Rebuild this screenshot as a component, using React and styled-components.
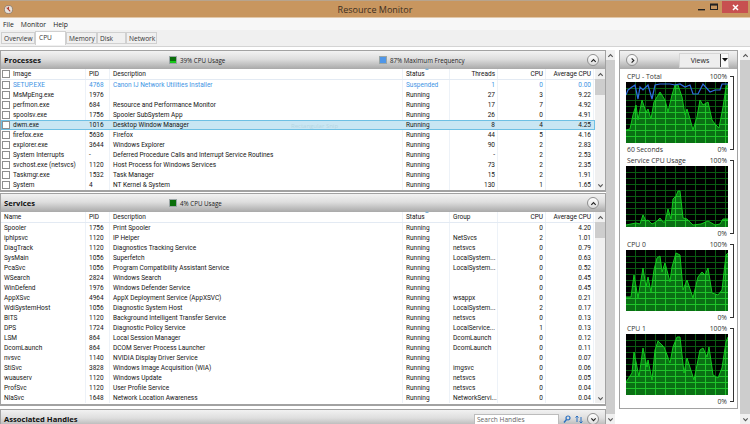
import React, { useId } from "react";
import styled, { createGlobalStyle } from "styled-components";

const GlobalStyle = createGlobalStyle`
  html, body { margin: 0; padding: 0; background: #fff; }
  * { box-sizing: border-box; }
`;

const Window = styled.div`
  position: relative;
  width: 750px;
  height: 424px;
  overflow: hidden;
  display: flex;
  flex-direction: column;
  background: #fff;
  color: #141414;
  font-family: "Open Sans", "Noto Sans", sans-serif;
  font-size: 6px;
`;

const TitleBar = styled.div`
  height: 18px;
  flex: none;
  display: flex;
  align-items: center;
  justify-content: center;
  position: relative;
  background: #c8965f;
  border-top: 1px solid #b7a48e;
  border-bottom: 1px solid #e2c8aa;
  font-size: 9px;
  color: #3d2f22;
`;

const AppIcon = styled.svg`
  position: absolute;
  left: 4px;
  top: 4px;
`;

const Controls = styled.div`
  position: absolute;
  right: 2px;
  top: 0;
  display: flex;
  align-items: flex-start;
  gap: 4px;
`;

const Ctrl = styled.div`
  width: ${({ $w }) => $w}px;
  height: 12px;
  display: flex;
  align-items: center;
  justify-content: center;
  color: #222;
  background: ${({ $close }) => ($close ? "#c75050" : "transparent")};
`;

const MenuBar = styled.div`
  height: 12px;
  flex: none;
  display: flex;
  align-items: center;
  gap: 7px;
  padding: 1px 0 0 3px;
  background: #f7f7f7;
  font-size: 6.8px;
  color: #222;
`;

const TabStrip = styled.div`
  height: 17px;
  flex: none;
  display: flex;
  align-items: flex-end;
  padding: 0 0 2px 1px;
  background: #f0f0f0;
  border-bottom: 1px solid #d4d4d4;
`;

const Tab = styled.div`
  width: ${({ $w }) => $w}px;
  height: ${({ $active }) => ($active ? 14 : 12)}px;
  padding: ${({ $active }) => ($active ? "0 0 2px 3px" : "0 0 0 2px")};
  margin-bottom: ${({ $active }) => ($active ? -1 : 0)}px;
  display: flex;
  align-items: center;
  font-size: 6.6px;
  color: #333;
  background: ${({ $active }) => ($active ? "#fff" : "#f0f0f0")};
  border: 1px solid #d0d0d0;
  border-bottom: ${({ $active }) => ($active ? "none" : "1px solid #d0d0d0")};
`;

const Body = styled.div`
  flex: 1;
  min-height: 0;
  display: flex;
  padding-top: 3px;
`;

const LeftColumn = styled.div`
  width: 606px;
  flex: none;
  display: flex;
  flex-direction: column;
  gap: 1px;
`;

const Panel = styled.section`
  display: flex;
  flex-direction: column;
  margin-top: ${({ $mt }) => $mt || 0}px;
  border: 1px solid #a2a2a2;
  border-bottom-width: 2px;
  background: #fff;
`;

const PanelHeader = styled.div`
  height: 18px;
  flex: none;
  display: flex;
  align-items: center;
  padding-right: 6px;
  background: linear-gradient(#f2f2f2, #dedede 45%, #a9a9a9);
`;

const PanelTitle = styled.div`
  width: 168px;
  padding-left: 3px;
  font-size: 7.6px;
  font-weight: 700;
  color: #111;
`;

const Legend = styled.div`
  width: ${({ $w }) => $w}px;
  display: flex;
  align-items: center;
  gap: 3px;
  font-size: 6.2px;
  color: #222;
`;

const Swatch = styled.span`
  width: 8px;
  height: 8px;
  flex: none;
  border: 1px solid #9aa5a5;
  background: ${({ $bottom, $top }) =>
    `linear-gradient(${$top} 70%, ${$bottom} 70%)`};
`;

const Spacer = styled.div`
  flex: 1;
`;

const RoundButton = styled.button`
  width: 12px;
  height: 12px;
  padding: 0;
  flex: none;
  display: flex;
  align-items: center;
  justify-content: center;
  border-radius: 50%;
  border: 1px solid #8f8f8f;
  background: linear-gradient(#fff, #dcdcdc);
  color: #222;
`;

const TableWrap = styled.div`
  display: flex;
  padding-bottom: ${({ $pb }) => $pb || 0}px;
`;

const Rows = styled.div`
  width: 594px;
  flex: none;
  font-family: Roboto, "Open Sans", sans-serif;
  font-size: 6.5px;
`;

const Row = styled.div`
  display: grid;
  grid-template-columns: 85px 24px 293px 47px 48px 48px 48px;
  height: ${({ $head, $h }) => ($head ? $h : 10)}px;
  align-items: stretch;
  color: ${({ $blue }) => ($blue ? "#3e94e4" : "inherit")};
  background: ${({ $sel }) => ($sel ? "#c9e6f3" : "transparent")};
  outline: ${({ $sel }) => ($sel ? "1px solid #6fc0e4" : "none")};
  outline-offset: -1px;
  border-bottom: ${({ $head }) => ($head ? "1px solid #e3eaf3" : "none")};
`;

const Cell = styled.div`
  display: flex;
  align-items: center;
  justify-content: ${({ $right }) => ($right ? "flex-end" : "flex-start")};
  gap: 3px;
  min-width: 0;
  position: relative;
  white-space: nowrap;
  overflow: visible;
  padding: ${({ $right }) => ($right ? "0 2px 0 0" : "0 0 0 3px")};
  border-right: 1px solid ${({ $sel }) => ($sel ? "transparent" : "#edf2f8")};
`;

const Check = styled.span`
  width: 8px;
  height: 8px;
  flex: none;
  margin-left: -2px;
  border: 1px solid #8e8f8f;
  background: #fff;
`;

const SortMark = styled.span`
  position: absolute;
  left: 22px;
  top: -1px;
  width: 0;
  height: 0;
  border-left: 2px solid transparent;
  border-right: 2px solid transparent;
  border-bottom: 2px solid #7fb4dc;
`;

const Scroll = styled.div`
  flex: none;
  width: ${({ $w }) => $w || 10}px;
  display: flex;
  flex-direction: column;
  align-items: center;
  background: #f0f0f0;
  color: #555;
`;

const Arrow = styled.div`
  height: 10px;
  width: 100%;
  flex: none;
  display: flex;
  align-items: center;
  justify-content: center;
`;

const Thumb = styled.div`
  width: 100%;
  height: ${({ $h }) => ($h ? `${$h}px` : "auto")};
  flex: ${({ $h }) => ($h ? "none" : 1)};
  background: #cdcdcd;
`;

const Fill = styled.div`
  flex: 1;
`;

const SearchBox = styled.div`
  width: 85px;
  height: 10px;
  padding-left: 2px;
  display: flex;
  align-items: center;
  background: #fff;
  border: 1px solid #bcbcbc;
  border-bottom: none;
  font-size: 6.6px;
  color: #666;
`;

const HandleTools = styled.div`
  display: flex;
  align-items: center;
  align-self: flex-start;
  gap: 4px;
  margin-top: 3px;
  color: #2a6fc0;
`;

const Gutter = styled(Scroll)`
  margin-left: ${({ $ml }) => $ml || 0}px;
`;

const RightPane = styled.aside`
  width: 119px;
  height: 359px;
  flex: none;
  margin-left: 4px;
  display: flex;
  flex-direction: column;
  border: 1px solid #a2a2a2;
  background: #fff;
`;

const RightHeader = styled.div`
  height: 18px;
  flex: none;
  display: flex;
  align-items: center;
  justify-content: space-between;
  padding: 0 8px 0 6px;
  background: linear-gradient(#f2f2f2, #dedede 45%, #a9a9a9);
`;

const ViewsButton = styled.div`
  width: 50px;
  height: 15px;
  display: flex;
  align-items: center;
  font-size: 7px;
  color: #222;
  background: #eeeeee;
  border: 1px solid #d6d6d6;
`;

const ViewsLabel = styled.span`
  flex: 1;
  text-align: center;
`;

const ViewsCaret = styled.span`
  width: 8px;
  height: 100%;
  display: flex;
  align-items: center;
  justify-content: center;
  border-left: 1px solid #444;
  background: #fafafa;
`;

const Charts = styled.div`
  padding: 2px 0 0 6px;
`;

const ChartBlock = styled.div`
  position: relative;
  width: 103px;
  height: 84px;
  display: grid;
  grid-template-rows: 11px 61px 12px;
  &::after {
    content: "";
    position: absolute;
    left: 104px;
    top: 5px;
    width: 3px;
    bottom: 5px;
    border: 1px solid #333;
    border-left: none;
  }
`;

const ChartLine = styled.div`
  display: flex;
  justify-content: space-between;
  align-items: center;
  padding: 0 2px 0 1px;
  font-size: 6.8px;
  color: #333;
`;

const GraphSvg = styled.svg`
  display: block;
  background: #000;
`;

const SnipGhost = styled.span`
  position: absolute;
  left: 291px;
  top: 122px;
  font-size: 6px;
  color: #b5d6e3;
`;

const processes = [
  ["SETUP.EXE", "4768", "Canon IJ Network Utilities Installer", "Suspended", "1", "0", "0.00"],
  ["MsMpEng.exe", "1976", "", "Running", "27", "3", "9.22"],
  ["perfmon.exe", "684", "Resource and Performance Monitor", "Running", "17", "7", "4.92"],
  ["spoolsv.exe", "1756", "Spooler SubSystem App", "Running", "26", "0", "4.91"],
  ["dwm.exe", "1016", "Desktop Window Manager", "Running", "8", "4", "4.25"],
  ["firefox.exe", "5636", "Firefox", "Running", "44", "5", "4.16"],
  ["explorer.exe", "3644", "Windows Explorer", "Running", "90", "2", "2.83"],
  ["System Interrupts", "-", "Deferred Procedure Calls and Interrupt Service Routines", "Running", "-", "2", "2.53"],
  ["svchost.exe (netsvcs)", "1120", "Host Process for Windows Services", "Running", "73", "2", "2.35"],
  ["Taskmgr.exe", "1532", "Task Manager", "Running", "15", "2", "1.91"],
  ["System", "4", "NT Kernel & System", "Running", "130", "1", "1.65"],
];

const services = [
  ["Spooler", "1756", "Print Spooler", "Running", "", "0", "4.20"],
  ["iphlpsvc", "1120", "IP Helper", "Running", "NetSvcs", "2", "1.01"],
  ["DiagTrack", "1120", "Diagnostics Tracking Service", "Running", "netsvcs", "0", "0.79"],
  ["SysMain", "1056", "Superfetch", "Running", "LocalSystem...", "0", "0.63"],
  ["PcaSvc", "1056", "Program Compatibility Assistant Service", "Running", "LocalSystem...", "0", "0.52"],
  ["WSearch", "2824", "Windows Search", "Running", "", "0", "0.45"],
  ["WinDefend", "1976", "Windows Defender Service", "Running", "", "0", "0.45"],
  ["AppXSvc", "4964", "AppX Deployment Service (AppXSVC)", "Running", "wsappx", "0", "0.21"],
  ["WdiSystemHost", "1056", "Diagnostic System Host", "Running", "LocalSystem...", "2", "0.17"],
  ["BITS", "1120", "Background Intelligent Transfer Service", "Running", "netsvcs", "0", "0.13"],
  ["DPS", "1724", "Diagnostic Policy Service", "Running", "LocalService...", "1", "0.13"],
  ["LSM", "864", "Local Session Manager", "Running", "DcomLaunch", "0", "0.12"],
  ["DcomLaunch", "864", "DCOM Server Process Launcher", "Running", "DcomLaunch", "0", "0.11"],
  ["nvsvc", "1140", "NVIDIA Display Driver Service", "Running", "", "0", "0.07"],
  ["StiSvc", "3828", "Windows Image Acquisition (WIA)", "Running", "imgsvc", "0", "0.06"],
  ["wuauserv", "1120", "Windows Update", "Running", "netsvcs", "0", "0.05"],
  ["ProfSvc", "1120", "User Profile Service", "Running", "netsvcs", "0", "0.04"],
  ["NlaSvc", "1648", "Network Location Awareness", "Running", "NetworkServi...", "0", "0.04"],
];

const graphs = [
  {
    top: "CPU - Total",
    bottom: "60 Seconds",
    line: "0,48 4,47 7,33 10,23 12,38 16,18 20,30 22,27 25,37 28,20 31,15 34,10 39,18 42,30 46,13 49,3 52,3 56,15 59,33 61,27 64,37 67,48 71,35 74,18 77,23 82,20 86,38 89,42 93,46 97,25 100,5 102,2",
    freq: "0,13 2,8 6,5 9,3 12,17 14,5 17,8 22,3 26,17 29,3 34,2 39,2 44,2 49,3 54,2 59,5 64,3 67,12 72,12 77,2 84,10 89,8 94,8 96,2 102,2",
  },
  {
    top: "Service CPU Usage",
    line: "0,59 5,58 10,57 14,58 17,49 20,55 22,54 26,58 30,56 34,52 37,56 39,56 42,43 45,53 47,33 50,30 52,25 54,25 57,52 61,53 67,59 75,58 82,55 89,59 94,58 97,53 102,53",
  },
  {
    top: "CPU 0",
    line: "0,47 5,47 8,25 12,48 17,18 20,37 22,27 25,42 28,20 31,8 34,6 36,22 39,13 44,32 46,17 50,3 54,5 57,40 61,30 67,48 72,27 76,22 79,25 82,18 86,43 92,45 96,40 100,5 102,3",
  },
  {
    top: "CPU 1",
    line: "0,48 6,39 8,18 13,43 17,14 21,33 22,26 26,46 29,16 32,7 38,13 44,29 47,13 51,3 54,3 58,39 61,24 68,46 74,16 77,14 81,23 83,13 87,41 92,44 96,34 100,8 102,3",
  },
];

const Chevron = ({ up, size = 7 }) => (
  <svg width={size} height={size} viewBox="0 0 8 8">
    <path
      d={up ? "M1.5 5.5 4 3 6.5 5.5" : "M1.5 2.8 4 5.3 6.5 2.8"}
      fill="none"
      stroke="currentColor"
      strokeWidth="1.3"
    />
  </svg>
);

const Graph = ({ line, freq }) => {
  const clip = useId();
  const area = `0,61 ${line} 102,61`;
  const verticals = Array.from({ length: 10 }, (_, i) => 9 + i * 10);
  const horizontals = Array.from({ length: 9 }, (_, i) => 6 + i * 6);
  const grid = (
    <>
      {verticals.map((x) => (
        <line key={x} x1={x + 0.5} x2={x + 0.5} y1="0" y2="61" />
      ))}
      {horizontals.map((y) => (
        <line key={y} x1="0" x2="102" y1={y + 0.5} y2={y + 0.5} />
      ))}
    </>
  );
  return (
    <GraphSvg width="102" height="61" viewBox="0 0 102 61">
      <defs>
        <clipPath id={clip}>
          <polygon points={area} />
        </clipPath>
      </defs>
      <g stroke="#0a5c12" strokeWidth="1">{grid}</g>
      <polygon points={area} fill="#0a7014" />
      <g stroke="#1fc42a" strokeWidth="1" clipPath={`url(#${clip})`}>{grid}</g>
      <polyline points={line} fill="none" stroke="#12c81e" strokeWidth="1" />
      {freq && <polyline points={freq} fill="none" stroke="#2f6fe0" strokeWidth="1.2" />}
    </GraphSvg>
  );
};

const ListRow = ({ row, withCheck, sel }) => (
  <Row $blue={row[0] === "SETUP.EXE"} $sel={sel}>
    <Cell $sel={sel}>
      {withCheck && <Check />}
      {row[0]}
    </Cell>
    <Cell $sel={sel}>{row[1]}</Cell>
    <Cell $sel={sel}>{row[2]}</Cell>
    <Cell $sel={sel}>{row[3]}</Cell>
    {withCheck ? <Cell $right $sel={sel}>{row[4]}</Cell> : <Cell $sel={sel}>{row[4]}</Cell>}
    <Cell $right $sel={sel}>{row[5]}</Cell>
    <Cell $right $sel={sel}>{row[6]}</Cell>
  </Row>
);

const HeadRow = ({ first, fifth, withCheck, h }) => (
  <Row $head $h={h}>
    <Cell>
      {withCheck && <Check />}
      {first}
    </Cell>
    <Cell>PID</Cell>
    <Cell>Description</Cell>
    <Cell>
      Status
      <SortMark />
    </Cell>
    {withCheck ? <Cell $right>{fifth}</Cell> : <Cell>{fifth}</Cell>}
    <Cell $right>CPU</Cell>
    <Cell $right>Average CPU</Cell>
  </Row>
);

const InnerScroll = () => (
  <Scroll>
    <Arrow>
      <Chevron up />
    </Arrow>
    <Thumb $h={16} />
    <Fill />
    <Arrow>
      <Chevron />
    </Arrow>
  </Scroll>
);

export default function App() {
  return (
    <>
      <GlobalStyle />
      <Window>
        <TitleBar>
          <AppIcon width="9" height="9" viewBox="0 0 10 10">
            <circle cx="5" cy="5" r="4.5" fill="#e9e3dc" stroke="#8c7f72" />
            <path d="M3 3 7 7M5 2 5 5" stroke="#b03a2e" strokeWidth="1.2" />
          </AppIcon>
          Resource Monitor
          <Controls>
            <Ctrl $w={8}>
              <svg width="8" height="8" viewBox="0 0 8 8">
                <rect x="0" y="6" width="7" height="1.4" fill="#222" />
              </svg>
            </Ctrl>
            <Ctrl $w={8}>
              <svg width="8" height="8" viewBox="0 0 8 8">
                <rect x="0.5" y="1" width="7" height="5.5" fill="none" stroke="#222" />
                <rect x="0.5" y="1" width="7" height="1.6" fill="#222" />
              </svg>
            </Ctrl>
            <Ctrl $w={26} $close>
              <svg width="7" height="7" viewBox="0 0 7 7">
                <path d="M1 1 6 6M6 1 1 6" stroke="#fff" strokeWidth="1.5" />
              </svg>
            </Ctrl>
          </Controls>
        </TitleBar>
        <MenuBar>
          <span>File</span>
          <span>Monitor</span>
          <span>Help</span>
        </MenuBar>
        <TabStrip>
          <Tab $w={34}>Overview</Tab>
          <Tab $w={31} $active>CPU</Tab>
          <Tab $w={31}>Memory</Tab>
          <Tab $w={29}>Disk</Tab>
          <Tab $w={31}>Network</Tab>
        </TabStrip>
        <Body>
          <LeftColumn>
            <Panel>
              <PanelHeader>
                <PanelTitle>Processes</PanelTitle>
                <Legend $w={210}>
                  <Swatch $top="#0a6e0a" $bottom="#18c818" />
                  39% CPU Usage
                </Legend>
                <Legend $w={120}>
                  <Swatch $top="#4f96e8" $bottom="#4f96e8" />
                  87% Maximum Frequency
                </Legend>
                <Spacer />
                <RoundButton>
                  <Chevron up />
                </RoundButton>
              </PanelHeader>
              <TableWrap>
                <Rows>
                  <HeadRow first="Image" fifth="Threads" withCheck h={11} />
                  {processes.map((row) => (
                    <ListRow key={row[0]} row={row} withCheck sel={row[0] === "dwm.exe"} />
                  ))}
                </Rows>
                <InnerScroll />
              </TableWrap>
            </Panel>
            <Panel>
              <PanelHeader>
                <PanelTitle>Services</PanelTitle>
                <Legend $w={210}>
                  <Swatch $top="#0a6e0a" $bottom="#0a6e0a" />
                  4% CPU Usage
                </Legend>
                <Spacer />
                <RoundButton>
                  <Chevron up />
                </RoundButton>
              </PanelHeader>
              <TableWrap $pb={1}>
                <Rows>
                  <HeadRow first="Name" fifth="Group" h={11} />
                  {services.map((row) => (
                    <ListRow key={row[0]} row={row} />
                  ))}
                </Rows>
                <InnerScroll />
              </TableWrap>
            </Panel>
            <Panel $mt={2}>
              <PanelHeader>
                <PanelTitle>Associated Handles</PanelTitle>
                <Spacer />
                <HandleTools>
                  <SearchBox>Search Handles</SearchBox>
                  <svg width="8" height="9" viewBox="0 0 8 9">
                    <circle cx="5" cy="3" r="2" fill="none" stroke="#2a6fc0" strokeWidth="1.2" />
                    <path d="M3.5 4.5 1 7.5" stroke="#2a6fc0" strokeWidth="1.4" />
                  </svg>
                  <svg width="8" height="9" viewBox="0 0 8 9">
                    <path d="M2 1 2 7M0.5 2.5 2 1 3.5 2.5M6 8 6 2M4.5 6.5 6 8 7.5 6.5" fill="none" stroke="#2a6fc0" />
                  </svg>
                  <RoundButton>
                    <Chevron />
                  </RoundButton>
                </HandleTools>
              </PanelHeader>
            </Panel>
          </LeftColumn>
          <Gutter $w={9}>
            <Arrow>
              <Chevron up />
            </Arrow>
            <Thumb />
            <Arrow>
              <Chevron />
            </Arrow>
          </Gutter>
          <RightPane>
            <RightHeader>
              <RoundButton>
                <svg width="7" height="7" viewBox="0 0 8 8">
                  <path d="M3 1.5 5.5 4 3 6.5" fill="none" stroke="#222" strokeWidth="1.3" />
                </svg>
              </RoundButton>
              <ViewsButton>
                <ViewsLabel>Views</ViewsLabel>
                <ViewsCaret>
                  <svg width="6" height="4" viewBox="0 0 6 4">
                    <path d="M0 0 6 0 3 3.5Z" fill="#111" />
                  </svg>
                </ViewsCaret>
              </ViewsButton>
            </RightHeader>
            <Charts>
              {graphs.map((g) => (
                <ChartBlock key={g.top}>
                  <ChartLine>
                    <span>{g.top}</span>
                    <span>100%</span>
                  </ChartLine>
                  <Graph line={g.line} freq={g.freq} />
                  <ChartLine>
                    <span>{g.bottom}</span>
                    <span>0%</span>
                  </ChartLine>
                </ChartBlock>
              ))}
            </Charts>
          </RightPane>
          <Gutter $w={10} $ml={2}>
            <Arrow>
              <Chevron up />
            </Arrow>
            <Thumb />
            <Arrow>
              <Chevron />
            </Arrow>
          </Gutter>
        </Body>
        <SnipGhost>Rectangular Snip</SnipGhost>
      </Window>
    </>
  );
}
